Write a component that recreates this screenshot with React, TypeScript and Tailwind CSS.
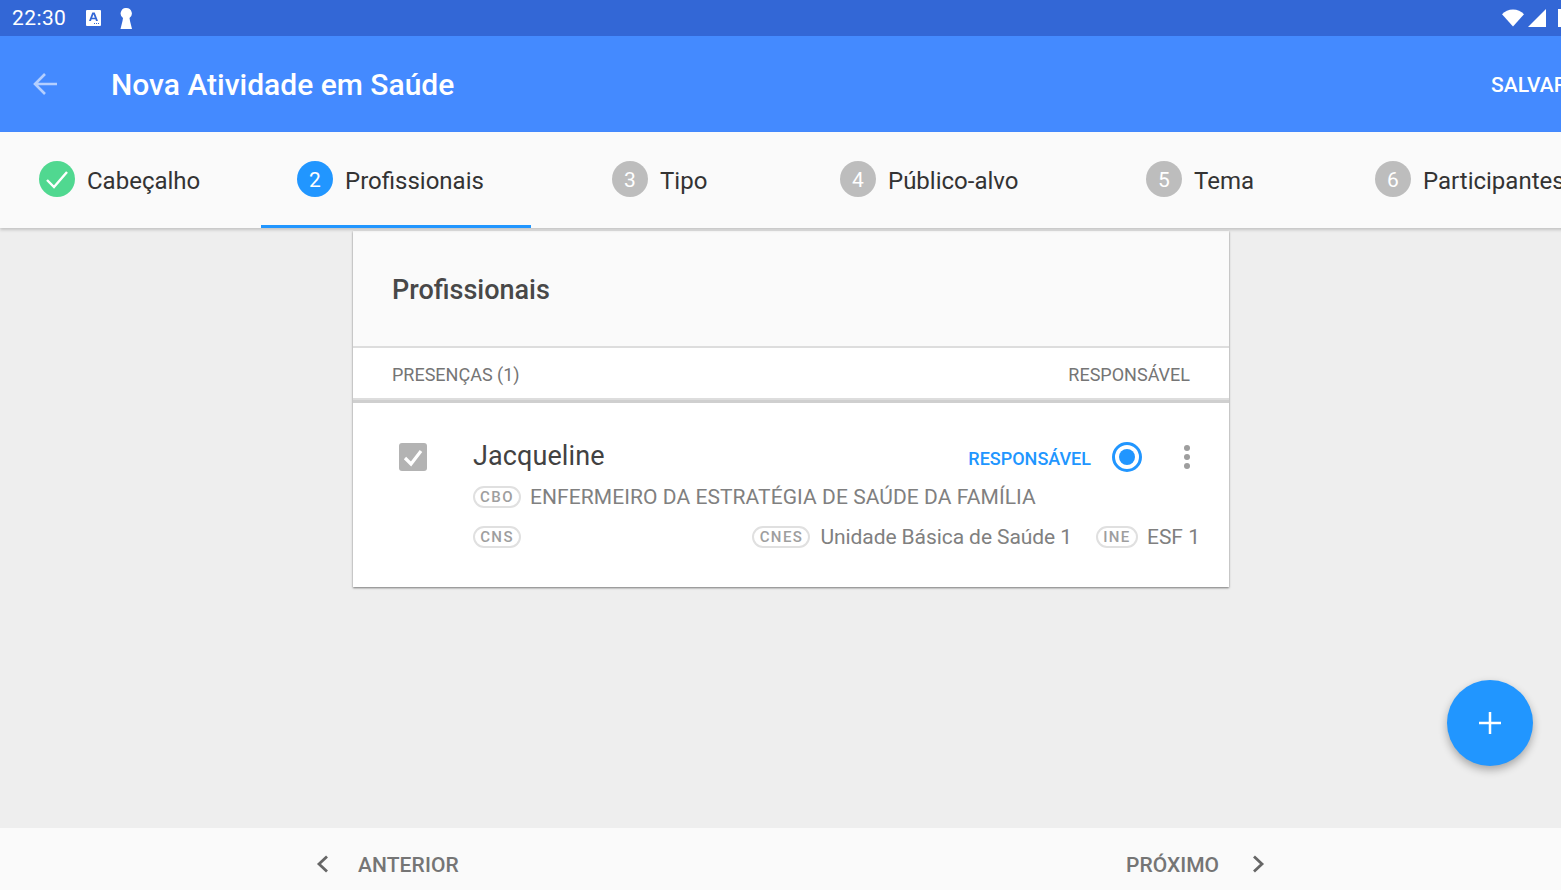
import React from "react";

const font = { fontFamily: "Roboto, sans-serif" };

function Chip({ label, w }: { label: string; w: string }) {
  return (
    <span className={`inline-flex h-[22px] ${w} shrink-0 items-center justify-center rounded-full border-2 border-[#e0e0e0] text-[15px] font-medium leading-none tracking-[1.4px] text-[#9e9e9e]`}>
      {label}
    </span>
  );
}

function Step({ n, label, cls, done, active }: { n: string; label: string; cls: string; done?: boolean; active?: boolean }) {
  return (
    <div className={`relative flex h-full shrink-0 items-center ${cls}`}>
      <span className={`-mt-[2px] flex h-9 w-9 shrink-0 items-center justify-center rounded-full pt-[3px] text-[21px] text-white ${done ? "bg-[#50d890]" : active ? "bg-[#2196ff]" : "bg-[#bdbdbd]"}`}>
        {done ? (
          <svg className="-mt-[3px]" width="26" height="26" viewBox="0 0 26 26" fill="none" stroke="white" strokeWidth="2.4"><path d="M3 14l7 7L23 6" /></svg>
        ) : n}
      </span>
      <span className="ml-3 mt-[2px] whitespace-nowrap text-[24px] text-[#333333]">{label}</span>
      {active && <span className="absolute bottom-0 left-0 right-0 h-[3px] bg-[#2196ff]" />}
    </div>
  );
}

export default function App() {
  return (
    <div className="h-[890px] w-[1561px] overflow-hidden bg-[#eeeeee]" style={font}>
      <div className="relative flex h-[900px] w-[1582px] flex-col">
        <div className="flex h-9 shrink-0 items-center justify-between bg-[#3367d6] pl-3 text-white">
          <div className="flex items-center">
            <span className="text-[21px] leading-none tracking-[0.4px]">22:30</span>
            <svg className="ml-[20px]" width="15" height="16" viewBox="0 0 15 16">
              <path fill="white" fillRule="evenodd" d="M1 0h13a1 1 0 011 1v14a1 1 0 01-1 1H1a1 1 0 01-1-1V1a1 1 0 011-1zM6.3 2.500L3 11h2l.6-1.700h3.800L10 11h2L8.700 2.500zM6.200 7.800L7.500 4.200l1.300 3.600zM8 13h1v1H8zM10 13h1v1h-1zM12 13h1v1h-1z" />
            </svg>
            <svg className="ml-[19px]" width="13" height="21" viewBox="0 0 13 21">
              <path fill="white" d="M6.500 0a5.500 5.500 0 013 10l.5 3 2 8H.5l2-8 .5-3A5.500 5.500 0 016.500 0z" />
            </svg>
          </div>
          <div className="flex items-center">
            <svg width="22" height="18" viewBox="0 0 23 18"><path fill="white" d="M0 5C3 2 7 0 11.500 0S20 2 23 5L11.500 18z" /></svg>
            <svg className="ml-[4px]" width="18" height="18" viewBox="0 0 18 18"><path fill="white" d="M18 0v18H0z" /></svg>
            <span className="ml-[12px] mr-[18px] h-[18px] w-[6px] bg-white" />
          </div>
        </div>

        <div className="flex h-24 shrink-0 items-center bg-[#448aff] text-white">
          <svg className="ml-[33px]" width="24" height="24" viewBox="0 0 24 24" fill="none" stroke="#b4cfff" strokeWidth="2.600">
            <path d="M24 12H2M12 2L2 12l10 10" />
          </svg>
          <span className="ml-[54px] mt-[2px] text-[30px] font-medium leading-none">Nova Atividade em Saúde</span>
          <span className="ml-auto mr-[15px] mt-[2px] text-[21px] font-medium leading-none">SALVAR</span>
        </div>

        <div className="z-10 flex h-24 shrink-0 bg-[#fafafa] shadow-[0_2px_3px_rgba(0,0,0,0.18)]">
          <Step n="1" label="Cabeçalho" cls="w-[261px] pl-[39px]" done />
          <Step n="2" label="Profissionais" cls="w-[270px] pl-[36px]" active />
          <Step n="3" label="Tipo" cls="w-[228px] pl-[81px]" />
          <Step n="4" label="Público-alvo" cls="w-[306px] pl-[81px]" />
          <Step n="5" label="Tema" cls="w-[310px] pl-[81px]" />
          <Step n="6" label="Participantes" cls="w-[207px]" />
        </div>

        <main className="flex-1 pt-[3px]">
          <div className="mx-auto w-[876px] bg-white shadow-[0_1px_2px_rgba(0,0,0,0.5)]">
            <div className="flex h-[115px] items-center bg-[#fafafa] pl-[39px] pt-[4px] text-[27px] font-medium text-[#484848]">Profissionais</div>
            <div className="flex h-[54px] items-center justify-between border-y-2 border-[#dddddd] bg-white px-[39px] pt-[2px] text-[18px] text-[#757575]">
              <span>PRESENÇAS (1)</span>
              <span>RESPONSÁVEL</span>
            </div>
            <div className="h-[3px] bg-[#cfcfcf]" />
            <div className="flex h-[184px] pl-[46px] pr-[29px] pt-[33px]">
              <span className="mt-[7px] flex h-7 w-7 shrink-0 items-center justify-center rounded-[3px] bg-[#b3b3b3]">
                <svg width="20" height="20" viewBox="0 0 20 20" fill="none" stroke="white" strokeWidth="3.200"><path d="M2 11l6 6L18 4" /></svg>
              </span>
              <div className="ml-[46px] flex-1">
                <div className="flex h-10 items-center">
                  <span className="text-[27px] leading-none tracking-[0.1px] text-[#424242]">Jacqueline</span>
                  <span className="ml-auto mt-[5px] text-[18px] font-medium leading-none text-[#2196ff]">RESPONSÁVEL</span>
                  <svg className="ml-[21px] mt-[2px]" width="30" height="30" viewBox="0 0 30 30">
                    <circle cx="15" cy="15" r="13.500" fill="none" stroke="#2196ff" strokeWidth="3" />
                    <circle cx="15" cy="15" r="8" fill="#2196ff" />
                  </svg>
                  <svg className="ml-[42px] mr-[10px] mt-[2px]" width="6" height="24" viewBox="0 0 6 24" fill="#9e9e9e">
                    <circle cx="3" cy="3" r="3" /><circle cx="3" cy="12" r="3" /><circle cx="3" cy="21" r="3" />
                  </svg>
                </div>
                <div className="mt-px flex h-10 items-center text-[21px] text-[#808080]">
                  <Chip label="CBO" w="w-[48px]" />
                  <span className="ml-[9px] mt-[2px] whitespace-nowrap tracking-[0.07px]">ENFERMEIRO DA ESTRATÉGIA DE SAÚDE DA FAMÍLIA</span>
                </div>
                <div className="flex h-10 items-center text-[21px] text-[#808080]">
                  <Chip label="CNS" w="w-[48px]" />
                  <div className="ml-auto flex items-center">
                    <Chip label="CNES" w="w-[58px]" />
                    <span className="ml-[10px] mt-[2px] whitespace-nowrap tracking-[-0.08px]">Unidade Básica de Saúde 1</span>
                    <div className="ml-[24px] flex"><Chip label="INE" w="w-[42px]" /></div>
                    <span className="ml-[9px] mt-[2px] whitespace-nowrap">ESF 1</span>
                  </div>
                </div>
              </div>
            </div>
          </div>
        </main>

        <div className="z-10 h-[72px] shrink-0 bg-[#fafafa]">
          <div className="mx-auto flex h-full w-[1000px] items-center justify-between text-[21px] font-medium text-[#757575]">
            <div className="ml-[25px] flex items-center">
              <svg width="13" height="18" viewBox="0 0 13 18" fill="none" stroke="#666666" strokeWidth="2.800"><path d="M11 1.500L3 9l8 7.500" /></svg>
              <span className="ml-[29px] mt-[2px] leading-none tracking-[0.1px]">ANTERIOR</span>
            </div>
            <div className="mr-[26px] flex items-center">
              <span className="mr-[33px] mt-[2px] leading-none">PRÓXIMO</span>
              <svg width="13" height="18" viewBox="0 0 13 18" fill="none" stroke="#666666" strokeWidth="2.800"><path d="M2 1.500L10 9l-8 7.500" /></svg>
            </div>
          </div>
        </div>

        <button className="absolute left-[1447px] top-[680px] z-20 flex h-[86px] w-[86px] items-center justify-center rounded-full bg-[#2196ff] shadow-[0_4px_8px_rgba(0,0,0,0.3)]">
          <svg width="22" height="22" viewBox="0 0 22 22" stroke="white" strokeWidth="2.500"><path d="M11 0v22M0 11h22" /></svg>
        </button>
      </div>
    </div>
  );
}
